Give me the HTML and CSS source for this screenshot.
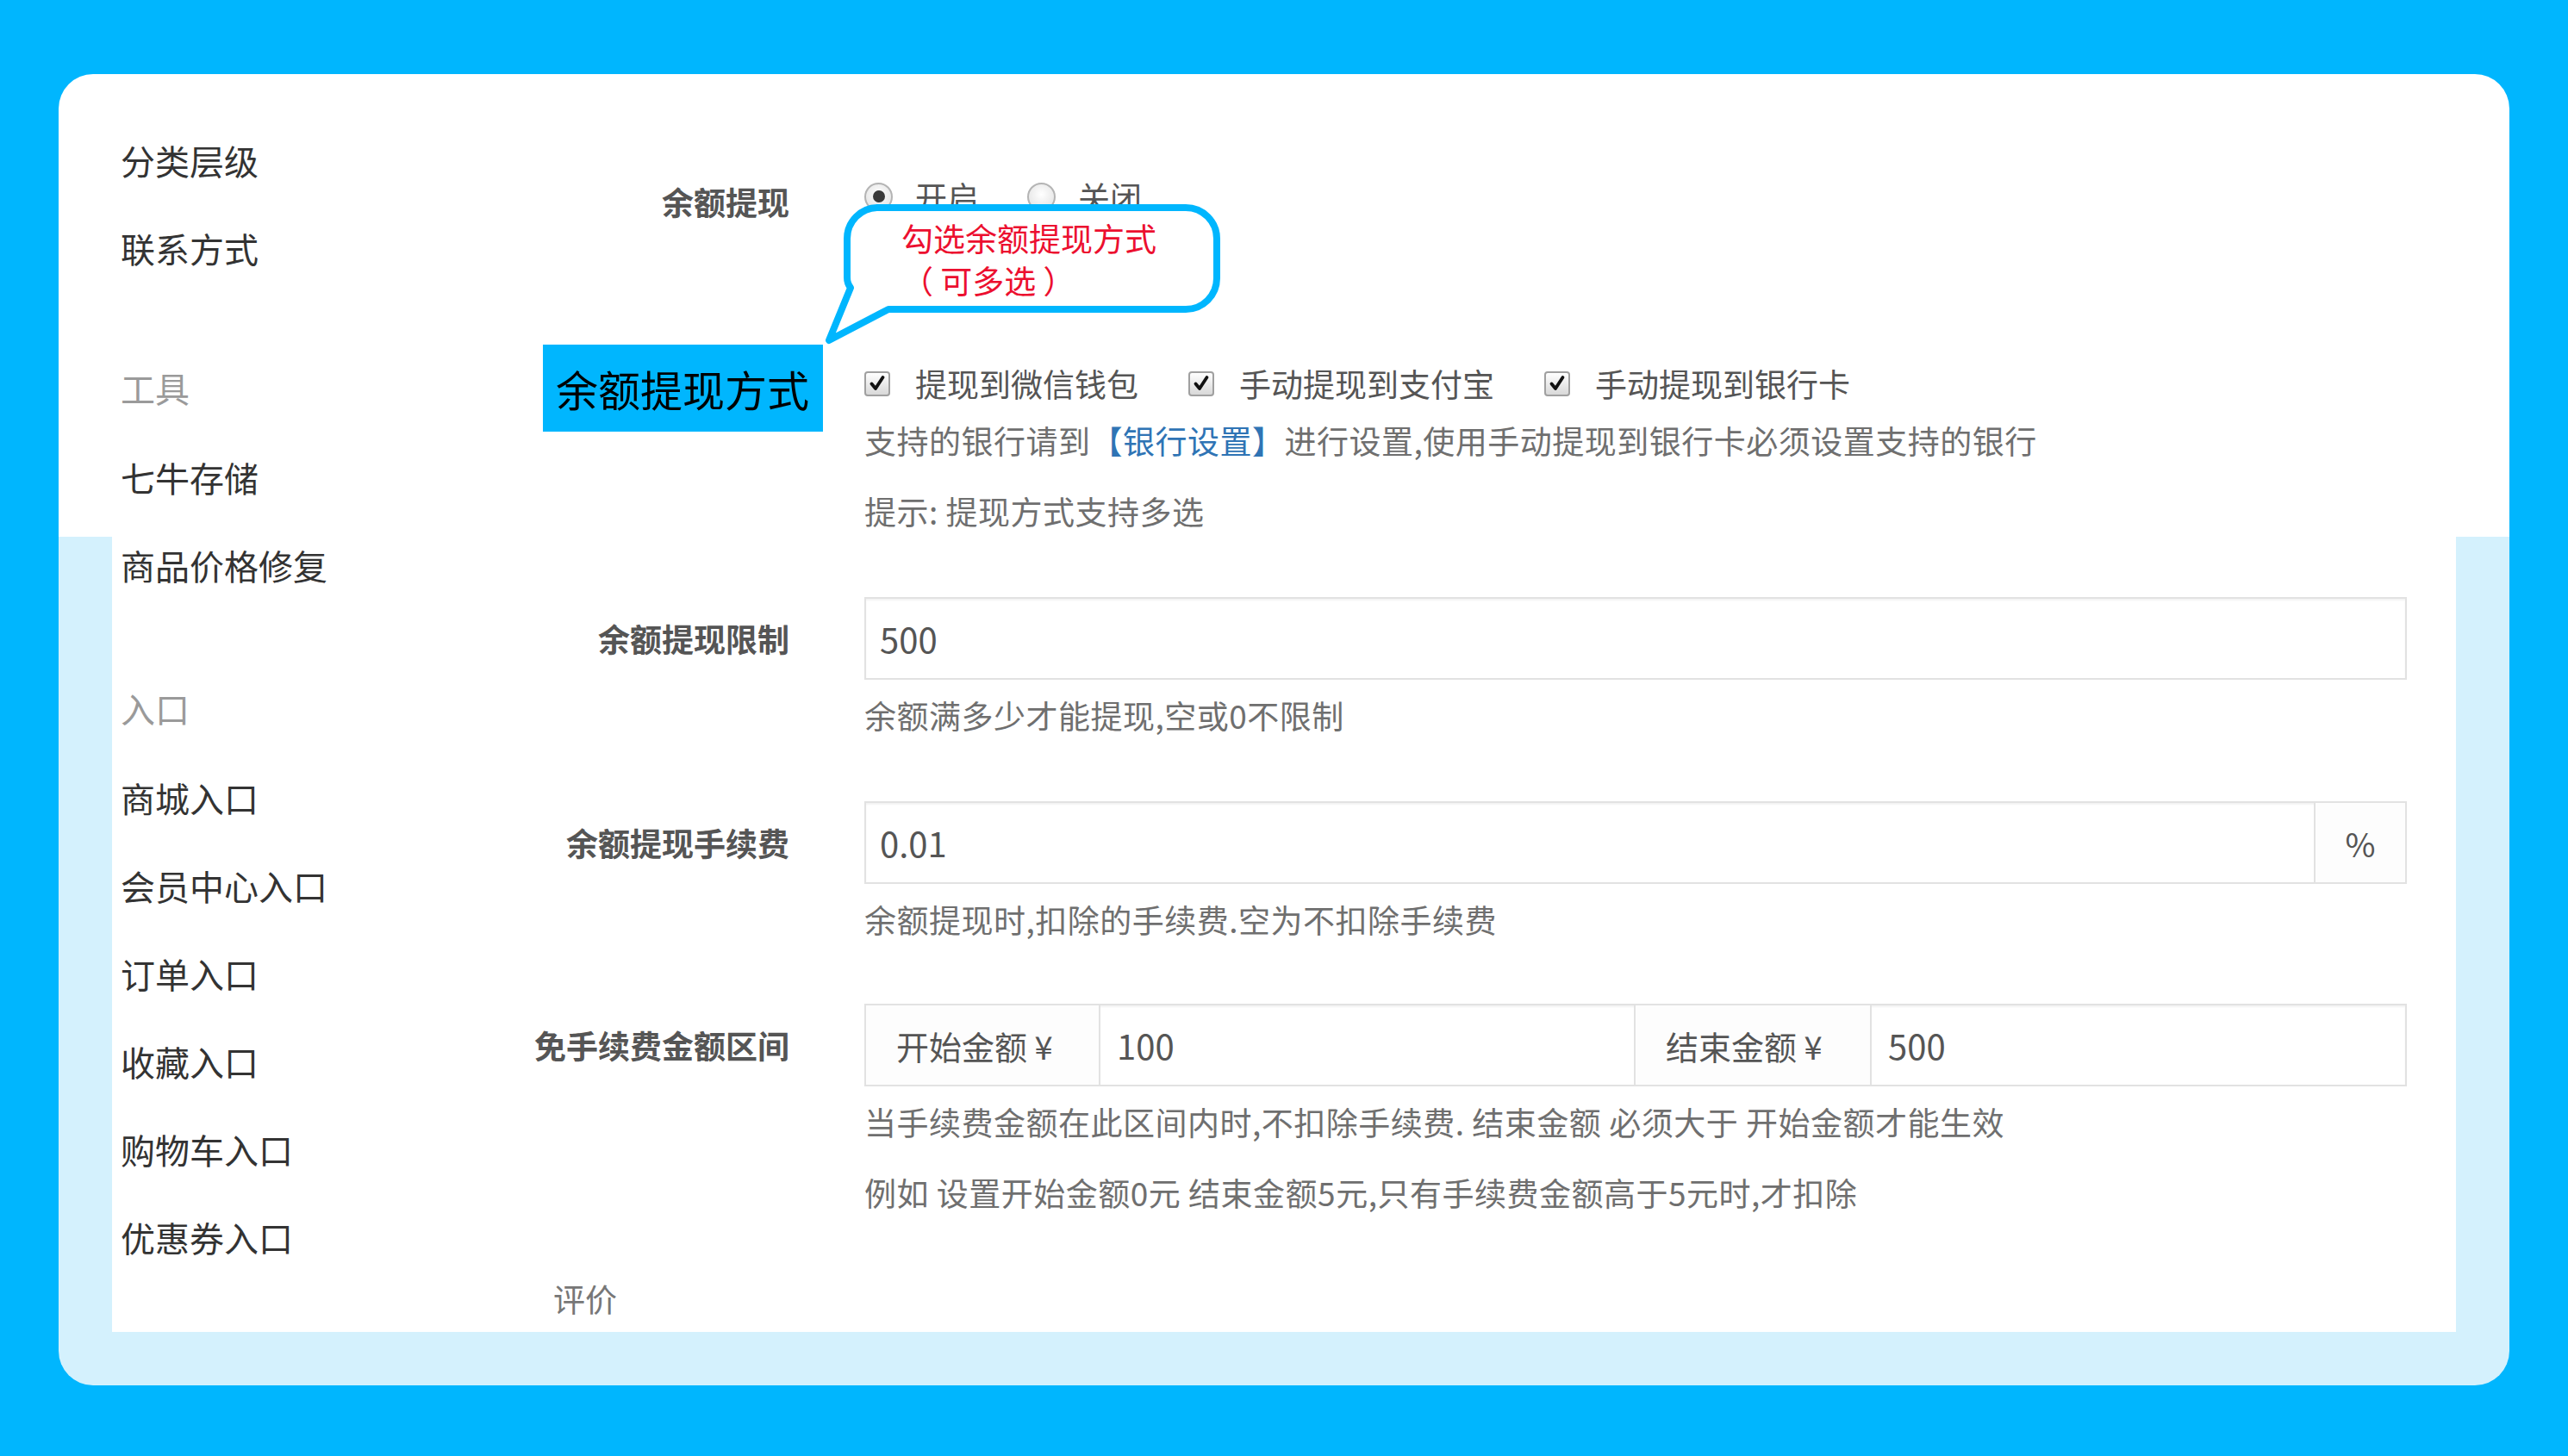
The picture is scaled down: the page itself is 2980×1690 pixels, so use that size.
FILE: index.html
```html
<!DOCTYPE html>
<html lang="zh-CN">
<head>
<meta charset="utf-8">
<title>余额提现设置</title>
<link rel="stylesheet" href="styles.css">
</head>
<body>
<div class="card">
  <div class="panel">
    <nav class="sidebar">
      <div class="nav-item">分类层级</div>
      <div class="nav-item">联系方式</div>
      <div class="nav-head first">工具</div>
      <div class="nav-item">七牛存储</div>
      <div class="nav-item">商品价格修复</div>
      <div class="nav-head second">入口</div>
      <div class="nav-item">商城入口</div>
      <div class="nav-item">会员中心入口</div>
      <div class="nav-item">订单入口</div>
      <div class="nav-item">收藏入口</div>
      <div class="nav-item">购物车入口</div>
      <div class="nav-item">优惠券入口</div>
    </nav>

    <main class="main">
      <div class="row row-first">
        <div class="label label-short">余额提现</div>
        <div class="content">
          <div class="choice-line">
            <span class="radio checked"></span><span class="choice-text radio-text">开启</span>
            <span class="radio"></span><span class="choice-text radio-text">关闭</span>
          </div>
        </div>
      </div>

      <div class="row row-methods">
        <div class="label"><span class="label-box">余额提现方式</span></div>
        <div class="content content-methods">
          <div class="choice-line">
            <span class="checkbox"><svg viewBox="0 0 22 22" width="22" height="22"><path d="M4.5 11.5 L9 17 L17.5 4" fill="none" stroke="#111" stroke-width="3.8" stroke-linecap="round" stroke-linejoin="round"/></svg></span><span class="choice-text">提现到微信钱包</span>
            <span class="checkbox"><svg viewBox="0 0 22 22" width="22" height="22"><path d="M4.5 11.5 L9 17 L17.5 4" fill="none" stroke="#111" stroke-width="3.8" stroke-linecap="round" stroke-linejoin="round"/></svg></span><span class="choice-text">手动提现到支付宝</span>
            <span class="checkbox"><svg viewBox="0 0 22 22" width="22" height="22"><path d="M4.5 11.5 L9 17 L17.5 4" fill="none" stroke="#111" stroke-width="3.8" stroke-linecap="round" stroke-linejoin="round"/></svg></span><span class="choice-text">手动提现到银行卡</span>
          </div>
          <div class="help help-tight">支持的银行请到<span class="link">【银行设置】</span>进行设置,使用手动提现到银行卡必须设置支持的银行</div>
          <div class="help help-next">提示: 提现方式支持多选</div>
        </div>
      </div>

      <div class="row row-field">
        <div class="label label-field">余额提现限制</div>
        <div class="content">
          <div class="input-group">
            <input class="field" type="text" value="500" readonly>
          </div>
          <div class="help">余额满多少才能提现,空或0不限制</div>
        </div>
      </div>

      <div class="row row-field">
        <div class="label label-field">余额提现手续费</div>
        <div class="content">
          <div class="input-group">
            <input class="field" type="text" value="0.01" readonly>
            <span class="addon addon-pct">%</span>
          </div>
          <div class="help">余额提现时,扣除的手续费.空为不扣除手续费</div>
        </div>
      </div>

      <div class="row row-field row-range">
        <div class="label label-field">免手续费金额区间</div>
        <div class="content">
          <div class="input-group">
            <span class="addon addon-text addon-start">开始金额 ¥</span>
            <input class="field field-mid" type="text" value="100" readonly>
            <span class="addon addon-text addon-end">结束金额 ¥</span>
            <input class="field field-mid" type="text" value="500" readonly>
          </div>
          <div class="help">当手续费金额在此区间内时,不扣除手续费. 结束金额 必须大于 开始金额才能生效</div>
          <div class="help help-next">例如 设置开始金额0元 结束金额5元,只有手续费金额高于5元时,才扣除</div>
        </div>
      </div>

      <div class="section-title">评价</div>
    </main>

    <div class="bubble">
      <svg class="bubble-shape" viewBox="0 0 480 180" width="480" height="180">
        <path d="M69 11 H426 A36 36 0 0 1 462 47 V93 A36 36 0 0 1 426 129 H81 L12 165 L37 104 Q33 99 33 92 V47 A36 36 0 0 1 69 11 Z" fill="#fff" stroke="#00b6fe" stroke-width="8" stroke-linejoin="round"/>
      </svg>
      <div class="bubble-text">勾选余额提现方式<br>（ 可多选 ）</div>
    </div>
  </div>
</div>
</body>
</html>
```

FILE: styles.css
```css
html, body {
  margin: 0;
  padding: 0;
}

body {
  background: #00b6fe;
  font-family: "Noto Sans CJK SC", "Noto Sans", sans-serif;
  width: 2980px;
  height: 1690px;
  overflow: hidden;
}

.card {
  box-sizing: border-box;
  margin: 86px 0 0 68px;
  width: 2844px;
  height: 1522px;
  padding: 0 62px 62px;
  border-radius: 40px;
  background: linear-gradient(to bottom, #ffffff 0, #ffffff 537px, #d4f1fd 537px);
  display: flex;
}

.panel {
  position: relative;
  flex: 1;
  background: #fff;
  display: flex;
}

/* sidebar */
.sidebar {
  box-sizing: border-box;
  width: 430px;
  padding: 49px 0 0 10px;
  flex-shrink: 0;
}

.nav-item {
  font-size: 40px;
  line-height: 102px;
  color: #333;
}

.nav-head {
  font-size: 40px;
  line-height: 106px;
  color: #9a9a9a;
}

.nav-head.first {
  margin-top: 58px;
}

.nav-head.second {
  margin-top: 62px;
}

/* main */
.main {
  flex: 1;
  padding: 112px 57px 0 0;
}

.row {
  display: grid;
  grid-template-columns: 356px 1fr;
  column-gap: 87px;
  align-items: start;
}

.row-first {
  height: 60px;
}

.row-methods {
  margin-top: 142px;
}

.row-field {
  margin-top: 75px;
}

.row-range {
  margin-top: 73px;
}

.label {
  text-align: right;
  font-size: 37px;
  font-weight: 700;
  color: #555;
  white-space: nowrap;
}

.label-short {
  line-height: 60px;
  padding-top: 6px;
}

.label-field {
  line-height: 96px;
}

.label-box {
  display: inline-block;
  background: #00b6fe;
  color: #000;
  font-weight: 400;
  font-size: 49px;
  line-height: 101px;
  height: 101px;
  padding: 0 16px 0 15px;
  margin-right: -39px;
}

.content-methods {
  padding-top: 15px;
}

.choice-line {
  display: flex;
  align-items: center;
  height: 60px;
}

.choice-text {
  font-size: 37px;
  color: #555;
  margin: 0 58px 0 29px;
  white-space: nowrap;
}

.radio-text {
  margin: 0 56px 0 26px;
}

.radio {
  box-sizing: border-box;
  width: 33px;
  height: 33px;
  border-radius: 50%;
  border: 2px solid #b4b4b4;
  background: radial-gradient(circle at 50% 40%, #ffffff 0, #dedede 100%);
  display: flex;
  align-items: center;
  justify-content: center;
  flex-shrink: 0;
}

.radio.checked::after {
  content: "";
  width: 14px;
  height: 14px;
  border-radius: 50%;
  background: #3a3a3a;
}

.checkbox {
  box-sizing: border-box;
  width: 30px;
  height: 29px;
  border: 2px solid #a0a0a0;
  border-radius: 4px;
  background: linear-gradient(to bottom, #ffffff, #d8d8d8);
  display: flex;
  align-items: center;
  justify-content: center;
  flex-shrink: 0;
}

.checkbox svg {
  display: block;
}

.help {
  font-size: 37px;
  line-height: 50px;
  letter-spacing: 0.5px;
  color: #6f6f6f;
  margin-top: 16px;
  white-space: nowrap;
}

.help-tight {
  margin-top: 11px;
}

.help-next {
  margin-top: 32px;
}

.link {
  color: #2f74b5;
}

/* inputs */
.input-group {
  box-sizing: border-box;
  display: flex;
  height: 96px;
  width: 1790px;
  border: 2px solid #e2e2e2;
  box-shadow: inset 0 2px 2px rgba(0, 0, 0, 0.05);
  background: #fff;
}

.field {
  flex: 1;
  min-width: 0;
  border: 0;
  outline: none;
  background: transparent;
  font: inherit;
  font-size: 40px;
  color: #555;
  padding: 0 0 0 16px;
  margin: 0;
}

.field-mid {
  padding-left: 19px;
}

.addon {
  display: flex;
  align-items: center;
  justify-content: center;
  border-left: 2px solid #e2e2e2;
  font-size: 38px;
  color: #555;
  white-space: nowrap;
  background: #fdfdfd;
}

.addon-pct {
  width: 104px;
}

.addon-text {
  justify-content: flex-start;
  box-sizing: border-box;
  padding-left: 35px;
  border-right: 2px solid #e2e2e2;
}

.addon-start {
  width: 272px;
  border-left: 0;
}

.addon-end {
  width: 276px;
}

.section-title {
  margin: 73px 0 0 82px;
  font-size: 37px;
  line-height: 50px;
  color: #777;
}

/* annotation bubble */
.bubble {
  position: absolute;
  left: 820px;
  top: 144px;
  width: 480px;
  height: 180px;
  z-index: 2;
}

.bubble-shape {
  display: block;
}

.bubble-text {
  position: absolute;
  left: 96px;
  top: 22px;
  font-size: 37px;
  line-height: 49px;
  color: #ec0f2f;
  white-space: nowrap;
}
```
